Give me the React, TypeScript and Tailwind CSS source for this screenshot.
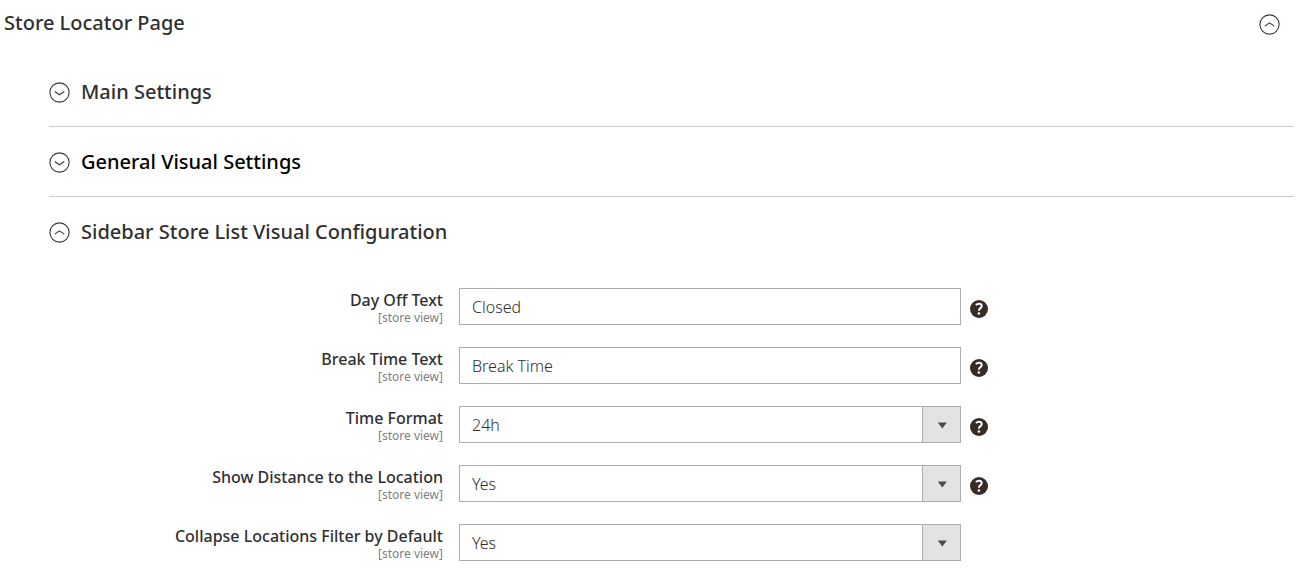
import { useState } from "react";
import type { ReactNode } from "react";

type Field = {
  id: string;
  label: string;
  value: string;
  options?: string[];
  help?: string;
};

const fields: Field[] = [
  { id: "day-off", label: "Day Off Text", value: "Closed", help: "About day off text" },
  { id: "break-time", label: "Break Time Text", value: "Break Time", help: "About break time text" },
  { id: "time-format", label: "Time Format", value: "24h", options: ["24h", "12h"], help: "About time format" },
  { id: "distance", label: "Show Distance to the Location", value: "Yes", options: ["Yes", "No"], help: "About distance" },
  { id: "collapse", label: "Collapse Locations Filter by Default", value: "Yes", options: ["Yes", "No"] },
];

function ToggleIcon({ open }: { open: boolean }) {
  return (
    <svg width="21" height="23" viewBox="0 0 21 23" fill="none" stroke="#41362f" className="shrink-0" aria-hidden="true">
      <circle cx="10.5" cy="12.5" r="9.6" strokeWidth="1.1" />
      <path d={open ? "M5.7 14.1 10.5 10.8l4.8 3.3" : "M5.7 11.5 10.5 14.8 15.3 11.5"} strokeWidth="1.1" />
    </svg>
  );
}

function HelpIcon() {
  return (
    <svg width="18" height="18" viewBox="0 0 18 18" aria-hidden="true">
      <circle cx="9" cy="9" r="9" fill="#372b26" />
      <path d="M5.8 5C6.8 4.1 7.8 3.7 8.9 3.7c1.7 0 2.8.9 2.8 2.3 0 1-.5 1.7-1.5 2.4-.9.6-1.3 1.1-1.3 2.4" fill="none" stroke="#fff" strokeWidth="1.9" />
      <circle cx="8.9" cy="13.5" r="1.3" fill="#fff" />
    </svg>
  );
}

function FieldRow({ field }: { field: Field }) {
  const box = "h-[37px] w-full rounded-none border border-[#adadad] bg-white pl-3 text-base font-light text-[#303030] outline-none focus:border-[#007bdb]";
  return (
    <div className="grid grid-cols-[410fr_502fr_333fr] items-start">
      <label htmlFor={field.id} className="pt-0.5 pr-4 text-right">
        <span className="block text-base leading-5 font-medium text-[#303030]">{field.label}</span>
        <span className="block text-xs leading-4 text-[#808080]">[store view]</span>
      </label>
      {field.options ? (
        <div className="relative">
          <select id={field.id} defaultValue={field.value} className={`${box} appearance-none pr-12`}>
            {field.options.map((o) => (
              <option key={o}>{o}</option>
            ))}
          </select>
          <span className="pointer-events-none absolute inset-y-0 right-0 flex w-[39px] items-center justify-center border border-[#adadad] bg-[#e3e3e3]">
            <svg width="10" height="8" viewBox="0 0 10 8" fill="#514943" aria-hidden="true">
              <path d="M.8 1.5h9L5.3 7.5z" />
            </svg>
          </span>
        </div>
      ) : (
        <input id={field.id} type="text" defaultValue={field.value} className={`${box} pr-3`} />
      )}
      {field.help && (
        <button type="button" aria-label={field.help} className="mt-3 ml-[9px] w-[18px]">
          <HelpIcon />
        </button>
      )}
    </div>
  );
}

type SectionProps = { title: string; initial?: boolean; active?: boolean; children?: ReactNode };

function Section({ title, initial = false, active = false, children }: SectionProps) {
  const [open, setOpen] = useState(initial);
  return (
    <section className="border-b border-[#cccccc] last:border-b-0">
      <h3>
        <button
          type="button"
          aria-expanded={open}
          onClick={() => setOpen(!open)}
          className={`flex w-full items-center gap-[11px] py-5 text-left text-xl leading-[29px] font-medium ${active ? "text-black" : "text-[#303030]"}`}
        >
          <ToggleIcon open={open} />
          {title}
        </button>
      </h3>
      {open && children}
    </section>
  );
}

export default function App() {
  const [open, setOpen] = useState(true);
  return (
    <main className="bg-white pr-[5px] pl-1 font-['Noto_Sans','Open_Sans',sans-serif] text-[#303030]">
      <h2>
        <button
          type="button"
          aria-expanded={open}
          onClick={() => setOpen(!open)}
          className="flex w-full items-center justify-between py-2 pr-3.5 text-left text-xl leading-[30px] font-medium"
        >
          Store Locator Page
          <ToggleIcon open={open} />
        </button>
      </h2>
      {open && (
        <div className="pt-[11px] pl-[45px]">
          <Section title="Main Settings" />
          <Section title="General Visual Settings" active />
          <Section title="Sidebar Store List Visual Configuration" initial>
            <div className="flex flex-col gap-[21px] pt-[22px] pb-4">
              {fields.map((f) => (
                <FieldRow key={f.id} field={f} />
              ))}
            </div>
          </Section>
        </div>
      )}
    </main>
  );
}
